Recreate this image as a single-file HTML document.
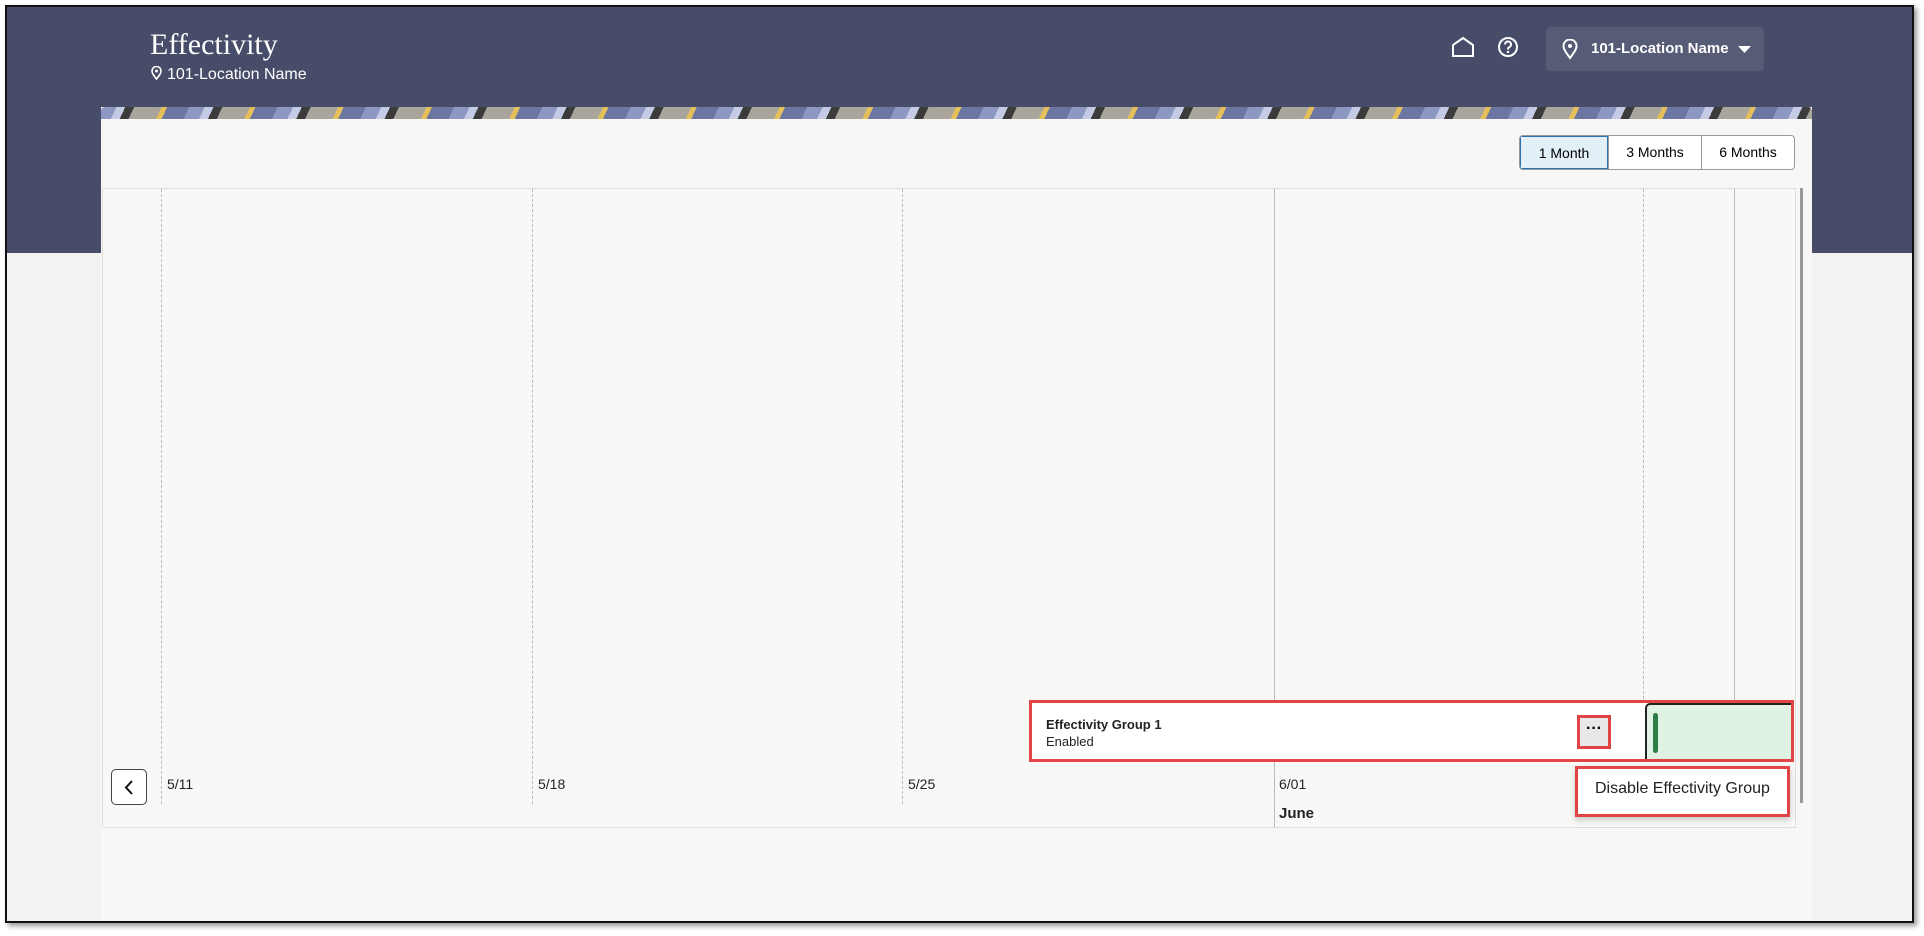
<!DOCTYPE html>
<html><head><meta charset="utf-8"><style>
*{box-sizing:border-box;margin:0;padding:0}
body{width:1924px;height:936px;background:#fff;font-family:"Liberation Sans",sans-serif;position:relative;overflow:hidden}
.frame{position:absolute;left:5px;top:5px;width:1909px;height:918px;border:2px solid #111;background:#f2f2f1;overflow:hidden;box-shadow:3px 3px 5px #999}
.hdr{position:absolute;left:0;top:0;width:100%;height:246px;background:#474c69}
.abs{position:absolute}
.t1{left:143px;top:21px;font-family:"Liberation Serif",serif;font-size:30px;color:#fff}
.t2{left:144px;top:59px;font-size:16px;color:#fff}
.dd{left:1539px;top:20px;width:218px;height:44px;background:#565b76;border-radius:4px;color:#fff;font-weight:bold;font-size:15px}
.card{left:94px;top:100px;width:1711px;height:830px;background:#f8f7f5}
.banner{left:0;top:0;width:100%;height:12px;border-radius:4px 4px 0 0;background:repeating-linear-gradient(115deg,#8d98c2 0 14px,#c5cbe4 14px 22px,#3b3b3b 22px 30px,#a9a49c 30px 55px,#e4bf5a 55px 60px,#6b76a3 60px 80px)}
.btns{left:1418px;top:28px;height:35px;display:flex;border:1px solid #999;border-radius:4px;font-size:14px;overflow:hidden;background:#fff}
.btns div{width:93px;text-align:center;line-height:33px;border-left:1px solid #999}
.btns div:first-child{border-left:none;background:#e3f0f7;border:1px solid #2a73b0;width:88px}
.chart{left:1px;top:81px;width:1694px;height:640px;border:1px solid #ddd;background:#f8f8f7}
.dl{position:absolute;top:0;height:615px;border-left:1px dashed #bbb}
.sl{position:absolute;top:0;border-left:1px solid #bbb}
.lbl{position:absolute;top:587px;font-size:14px;color:#222}
</style></head><body>
<div class="frame">
<div class="hdr"></div>
<div class="abs t1">Effectivity</div>
<div class="abs t2"><svg width="11" height="14" viewBox="0 0 11 14" style="vertical-align:-1px;margin-right:5px"><path d="M5.5 13C2 8.5 1 7 1 5a4.5 4.5 0 0 1 9 0c0 2-1 3.5-4.5 8z" fill="none" stroke="#fff" stroke-width="1.6"/><circle cx="5.5" cy="5" r="1.5" fill="#fff"/></svg>101-Location Name</div>
<svg class="abs" style="left:1444px;top:29px" width="24" height="22" viewBox="0 0 24 22"><path d="M2 20V9L12 2l10 7v11z" fill="none" stroke="#fff" stroke-width="2"/></svg>
<svg class="abs" style="left:1490px;top:29px" width="22" height="22" viewBox="0 0 22 22"><circle cx="11" cy="11" r="9" fill="none" stroke="#fff" stroke-width="2"/><path d="M8 8.5a3 3 0 1 1 4 2.8c-1 .4-1 1-1 2.2" fill="none" stroke="#fff" stroke-width="2"/><circle cx="11" cy="16" r="1.2" fill="#fff"/></svg>
<div class="abs dd"><svg class="abs" style="left:16px;top:12px" width="16" height="21" viewBox="0 0 16 21"><path d="M8 19C3 12 1.5 10 1.5 7a6.5 6.5 0 0 1 13 0c0 3-1.5 5-6.5 12z" fill="none" stroke="#fff" stroke-width="2"/><circle cx="8" cy="7" r="2" fill="#fff"/></svg><span class="abs" style="left:45px;top:13px">101-Location Name</span><svg class="abs" style="left:192px;top:19px" width="13" height="8"><path d="M0 0h13L6.5 7z" fill="#fff"/></svg></div>
<div class="abs card">
<div class="abs banner"></div>
<div class="abs btns"><div>1 Month</div><div>3 Months</div><div>6 Months</div></div>
<div class="abs chart">
<div class="dl" style="left:58px"></div><div class="dl" style="left:429px"></div><div class="dl" style="left:799px"></div><div class="sl" style="left:1171px;height:638px"></div><div class="dl" style="left:1540px;height:520px"></div><div class="sl" style="left:1631px;height:520px"></div>
<div class="lbl" style="left:64px">5/11</div><div class="lbl" style="left:435px">5/18</div><div class="lbl" style="left:805px">5/25</div><div class="lbl" style="left:1176px">6/01</div><div class="lbl" style="left:1176px;top:616px;font-weight:bold;font-size:15px">June</div>
<div class="abs" style="left:8px;top:580px;width:36px;height:36px;border:1px solid #444;border-radius:5px;background:#fff"><svg class="abs" style="left:11px;top:10px" width="12" height="15"><path d="M9 1L3 7.5 9 14" fill="none" stroke="#111" stroke-width="2"/></svg></div>
</div>
<div class="abs" style="left:1699px;top:81px;width:3px;height:615px;background:#999"></div>
<div class="abs" style="left:928px;top:593px;width:765px;height:62px;border:3px solid #e04444;background:#fff">
<div class="abs" style="left:14px;top:14px;font-size:13px;font-weight:bold;color:#222">Effectivity Group 1</div>
<div class="abs" style="left:14px;top:31px;font-size:13px;color:#222">Enabled</div>
<div class="abs" style="left:545px;top:12px;width:34px;height:34px;border:3px solid #e04444;background:#e8e8e8;text-align:center;font-weight:bold;font-size:16px;line-height:22px">···</div>
<div class="abs" style="left:613px;top:0;width:146px;height:56px;background:#dff2e4;border-left:2px solid #222;border-top:2px solid #222;border-radius:5px 0 0 0"><div class="abs" style="left:6px;top:8px;width:5px;height:40px;background:#2e7d46;border-radius:3px"></div></div>
</div>
<div class="abs" style="left:1474px;top:659px;width:215px;height:51px;border:3px solid #e04444;background:#fff;font-size:16px;color:#222;padding:11px 0 0 17px;box-shadow:0 3px 6px rgba(0,0,0,.2)">Disable Effectivity Group</div>
</div>
</div>
</body></html>
